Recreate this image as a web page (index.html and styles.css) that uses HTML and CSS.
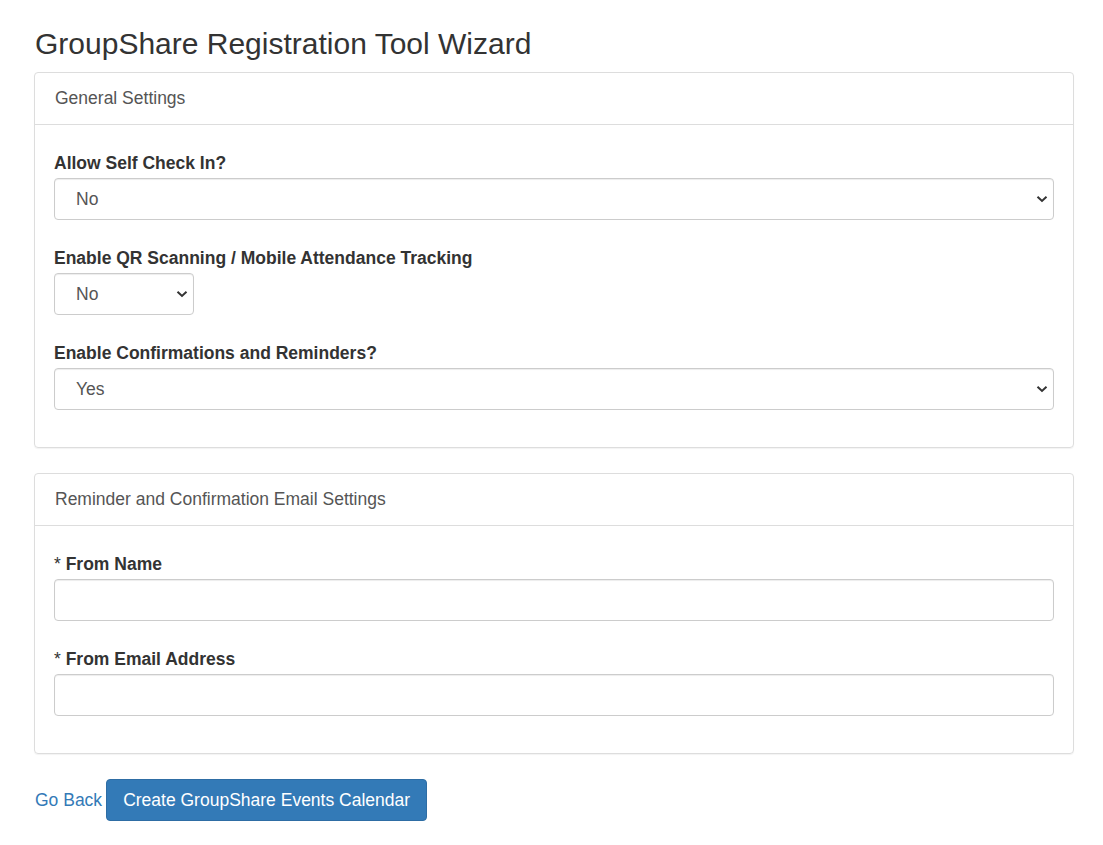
FILE: index.html
```html
<!DOCTYPE html>
<html>
<head>
<meta charset="utf-8">
<link rel="stylesheet" href="styles.css">
</head>
<body>
<div class="page">
  <h2 class="title">GroupShare Registration Tool Wizard</h2>

  <div class="panel">
    <div class="panel-heading">General Settings</div>
    <div class="panel-body">
      <div class="form-group">
        <label class="label">Allow Self Check In?</label>
        <div class="select-wrap">
          <select class="control"><option>No</option><option>Yes</option></select>
          <svg class="chev" width="12" height="8" viewBox="0 0 12 8"><path d="M1.5 1.8 L6 6 L10.5 1.8" fill="none" stroke="#333" stroke-width="2"/></svg>
        </div>
      </div>
      <div class="form-group">
        <label class="label">Enable QR Scanning / Mobile Attendance Tracking</label>
        <div class="select-wrap small">
          <select class="control"><option>No</option><option>Yes</option></select>
          <svg class="chev" width="12" height="8" viewBox="0 0 12 8"><path d="M1.5 1.8 L6 6 L10.5 1.8" fill="none" stroke="#333" stroke-width="2"/></svg>
        </div>
      </div>
      <div class="form-group">
        <label class="label">Enable Confirmations and Reminders?</label>
        <div class="select-wrap">
          <select class="control"><option>Yes</option><option>No</option></select>
          <svg class="chev" width="12" height="8" viewBox="0 0 12 8"><path d="M1.5 1.8 L6 6 L10.5 1.8" fill="none" stroke="#333" stroke-width="2"/></svg>
        </div>
      </div>
    </div>
  </div>

  <div class="panel">
    <div class="panel-heading">Reminder and Confirmation Email Settings</div>
    <div class="panel-body">
      <div class="form-group">
        <label class="label"><span class="req">*</span> From Name</label>
        <input class="control" type="text">
      </div>
      <div class="form-group">
        <label class="label"><span class="req">*</span> From Email Address</label>
        <input class="control" type="text">
      </div>
    </div>
  </div>

  <div class="actions">
    <a class="back" href="#">Go Back</a>
    <button class="btn">Create GroupShare Events Calendar</button>
  </div>
</div>
</body>
</html>
```

FILE: styles.css
```css
html, body {
  margin: 0;
  padding: 0;
  background: #fff;
}
body {
  font-family: "Liberation Sans", Arial, sans-serif;
  color: #333;
  font-size: 17.5px;
}
.page {
  width: 1040px;
  margin-left: 34px;
  padding-top: 27px;
}
.title {
  font-size: 30px;
  font-weight: normal;
  line-height: 34px;
  margin: 0 0 11px 1px;
  color: #333;
}
.panel {
  border: 1px solid #ddd;
  border-radius: 4px;
  margin-bottom: 25px;
  box-shadow: 0 1px 1px rgba(0,0,0,0.05);
}
.panel-heading {
  padding: 15px 20px 16px;
  line-height: 20px;
  font-size: 17.5px;
  color: #555;
  border-bottom: 1px solid #ddd;
}
.panel-body {
  padding: 27px 19px 10px;
}
.form-group {
  margin-bottom: 27px;
}
.label {
  display: block;
  font-weight: bold;
  line-height: 22px;
  margin-bottom: 4px;
  color: #333;
}
.req {
  font-weight: normal;
}
.select-wrap {
  position: relative;
}
.select-wrap.small {
  width: 140px;
}
.control {
  display: block;
  box-sizing: border-box;
  width: 100%;
  height: 42px;
  padding: 0 30px 0 21px;
  font-family: "Liberation Sans", Arial, sans-serif;
  font-size: 17.5px;
  color: #555;
  background: #fff;
  border: 1px solid #ccc;
  border-radius: 4px;
  box-shadow: inset 0 1px 1px rgba(0,0,0,0.075);
  -webkit-appearance: none;
  appearance: none;
  outline: none;
  margin: 0;
}
.chev {
  position: absolute;
  right: 6px;
  top: 17px;
  pointer-events: none;
}
.actions {
  display: flex;
  align-items: center;
  gap: 4px;
  margin-left: 1px;
  margin-top: 2px;
}
.back {
  color: #337ab7;
  text-decoration: none;
  font-size: 17.5px;
}
.btn {
  height: 42px;
  padding: 0 16px;
  font-family: "Liberation Sans", Arial, sans-serif;
  font-size: 17.5px;
  color: #fff;
  background: #337ab7;
  border: 1px solid #2e6da4;
  border-radius: 4px;
}
```
